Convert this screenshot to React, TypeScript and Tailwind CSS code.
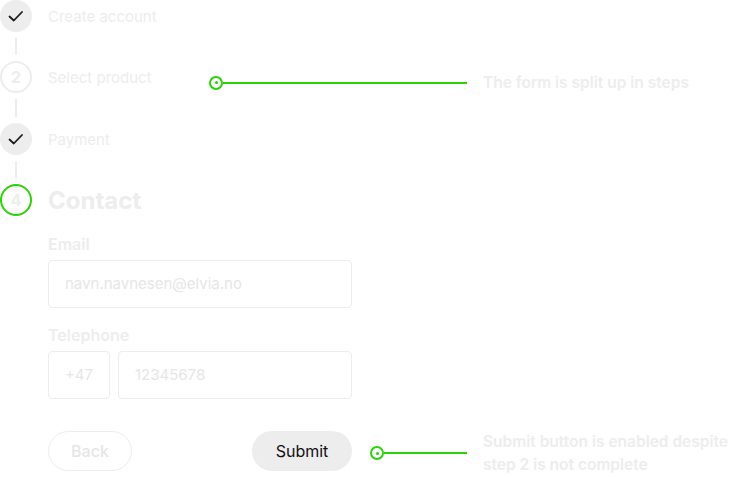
import React from 'react';

const Check = () => (
  <svg width="18" height="18" viewBox="0 0 18 18" fill="none">
    <path d="M2.5 9.5 L6.8 13.5 L15 5" stroke="#1a1a1a" strokeWidth="1.8" strokeLinecap="round" strokeLinejoin="round" />
  </svg>
);

const Connector = ({ h }: { h: string }) => (
  <div className="flex w-8 justify-center py-[6px]">
    <div className={`w-[2px] bg-[#ededed] ${h}`} />
  </div>
);

const Step = ({ done, num, label }: { done?: boolean; num: string; label: string }) => (
  <div className="flex h-8 items-center gap-4">
    {done ? (
      <div className="flex h-8 w-8 items-center justify-center rounded-full bg-[#ededed]">
        <Check />
      </div>
    ) : (
      <div className="flex h-8 w-8 items-center justify-center rounded-full border-2 border-[#ededed] text-[16px] font-bold text-[#ededed]">
        {num}
      </div>
    )}
    <span className="mt-[3px] text-[15px] text-[#ededed]">{label}</span>
  </div>
);

const Pin = () => (
  <div className="flex h-[14px] w-[14px] items-center justify-center rounded-full border-2 border-[#29d305] bg-white">
    <div className="h-[3px] w-[3px] rounded-full bg-[#29d305]" />
  </div>
);

export default function App() {
  return (
    <div className="relative h-[477px] w-[731px] overflow-hidden bg-white font-['Inter',sans-serif]">
      <div className="flex w-[352px] flex-col">
        <Step done num="1" label="Create account" />
        <Connector h="h-[17px]" />
        <Step num="2" label="Select product" />
        <Connector h="h-[18px]" />
        <Step done num="3" label="Payment" />
        <Connector h="h-[17px]" />
        <div className="flex h-8 items-center gap-4">
          <div className="flex h-8 w-8 items-center justify-center rounded-full border-2 border-[#29d305] text-[16px] font-bold text-[#ededed]">
            4
          </div>
          <span className="mt-[2px] text-[24px] font-bold text-[#ededed]">Contact</span>
        </div>

        <div className="ml-12 mt-4 flex flex-col">
          <label className="text-[16px] font-semibold leading-6 text-[#ededed]">Email</label>
          <div className="mt-1 flex h-[48px] items-center rounded border border-[#ededed] px-4 text-[15px] text-[#e6e6e6]">
            navn.navnesen@elvia.no
          </div>
          <label className="mt-[15px] text-[16px] font-semibold leading-6 text-[#ededed]">Telephone</label>
          <div className="mt-1 flex gap-2">
            <div className="flex h-[48px] w-[62px] items-center justify-center rounded border border-[#ededed] text-[15px] text-[#e6e6e6]">
              +47
            </div>
            <div className="flex h-[48px] flex-1 items-center rounded border border-[#ededed] px-4 text-[15px] text-[#e6e6e6]">
              12345678
            </div>
          </div>
          <div className="mt-8 flex justify-between">
            <button className="h-10 w-[84px] rounded-full border border-[#ededed] text-[16px] font-medium text-[#e6e6e6]">
              Back
            </button>
            <button className="h-10 w-[100px] rounded-full bg-[#ededed] text-[16px] font-normal text-[#111]">
              Submit
            </button>
          </div>
        </div>
      </div>

      <div className="absolute left-[209px] top-[71px] flex items-center">
        <Pin />
        <div className="h-[2px] w-[244px] bg-[#29d305]" />
        <div className="w-4" />
        <span className="whitespace-nowrap text-[15.5px] font-semibold text-[#ededed]">The form is split up in steps</span>
      </div>

      <div className="absolute left-[370px] top-[430px] flex items-center">
        <Pin />
        <div className="h-[2px] w-[83px] bg-[#29d305]" />
        <div className="w-4" />
        <span className="w-[250px] text-[15.5px] font-semibold leading-[23px] text-[#ededed]">
          Submit button is enabled despite step 2 is not complete
        </span>
      </div>
    </div>
  );
}
